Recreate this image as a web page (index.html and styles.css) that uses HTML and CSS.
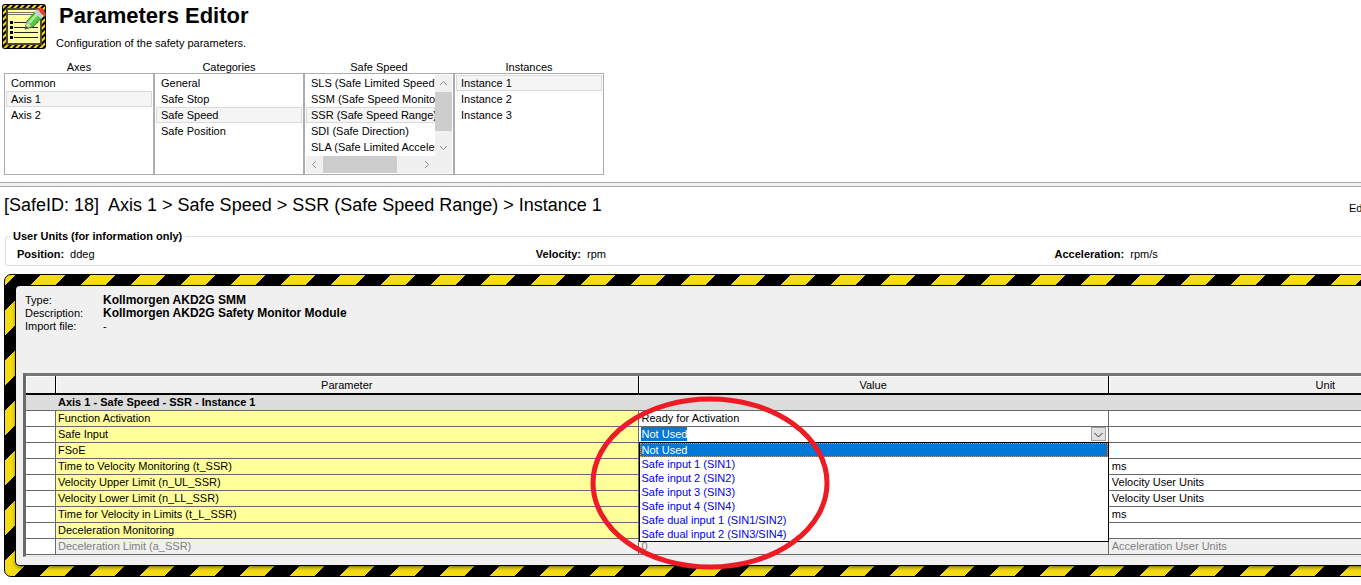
FILE: index.html
```html
<!DOCTYPE html>
<html lang="en">
<head>
<meta charset="utf-8">
<title>Parameters Editor</title>
<link rel="stylesheet" href="styles.css">
</head>
<body>
<header class="page-head">
  <svg class="logo" viewBox="0 0 44 45" aria-hidden="true">
    <defs>
      <pattern id="hazard" width="6" height="6" patternUnits="userSpaceOnUse">
        <rect width="6" height="6" fill="#000"/>
        <path d="M0 3L3 0H6L0 6ZM6 3V6H3Z" fill="#ffd90a"/>
      </pattern>
    </defs>
    <rect width="44" height="45" rx="3" fill="#000"/>
    <rect x="1" y="1" width="42" height="43" rx="2" fill="url(#hazard)"/>
    <rect x="4" y="4" width="36" height="37" fill="#4a4a38"/>
    <rect x="6" y="6" width="32" height="33" fill="#ffffa8"/>
    <path d="M6 8.500H38M6 10.500H38" stroke="#77775f"/>
    <path d="M8 17h3v3H8zM8 22h3v3H8zM8 27h3v3H8zM8 32h3v3H8z" fill="#000"/>
    <path d="M12 18.500H36M12 23.500H36M12 28.500H36M12 33.500H36" stroke="#222"/>
    <path d="M23 25l2-8L34 7l6 6-9 10z" fill="#55c94a" stroke="#2b7d2b"/>
    <path d="M26 18l9-10 2 2-9 10z" fill="#a8f08e"/>
    <path d="M23 25l2-7 4 4z" fill="#e8d9b0"/>
    <path d="M23 25l1-3 2 2z" fill="#333"/>
    <path d="M32 8l3-3 7 7-3 3z" fill="#c8ccd4"/>
    <path d="M35 5q4-3 7 1t1 7z" fill="#e0402a"/>
  </svg>
  <div>
    <h1>Parameters Editor</h1>
    <p>Configuration of the safety parameters.</p>
  </div>
</header>

<nav class="pickers">
  <section class="picker">
    <h2>Axes</h2>
    <ul>
      <li><button>Common</button></li>
      <li><button class="on">Axis 1</button></li>
      <li><button>Axis 2</button></li>
    </ul>
  </section>
  <section class="picker">
    <h2>Categories</h2>
    <ul>
      <li><button>General</button></li>
      <li><button>Safe Stop</button></li>
      <li><button class="on">Safe Speed</button></li>
      <li><button>Safe Position</button></li>
    </ul>
  </section>
  <section class="picker">
    <h2>Safe Speed</h2>
    <div class="scroller">
      <ul>
        <li><button>SLS (Safe Limited Speed)</button></li>
        <li><button>SSM (Safe Speed Monitor)</button></li>
        <li><button class="on">SSR (Safe Speed Range)</button></li>
        <li><button>SDI (Safe Direction)</button></li>
        <li><button>SLA (Safe Limited Acceleration)</button></li>
      </ul>
      <div class="vbar">
        <svg viewBox="0 0 17 17"><path d="M5 10l3.500-3.500L12 10"/></svg>
        <span class="thumb"></span>
        <svg viewBox="0 0 17 17"><path d="M5 7l3.500 3.500L12 7"/></svg>
      </div>
      <div class="hbar">
        <svg viewBox="0 0 17 17"><path d="M10 5L6.500 8.500L10 12"/></svg>
        <span class="thumb"></span>
        <svg viewBox="0 0 17 17"><path d="M7 5l3.500 3.500L7 12"/></svg>
      </div>
    </div>
  </section>
  <section class="picker">
    <h2>Instances</h2>
    <ul>
      <li><button class="on">Instance 1</button></li>
      <li><button>Instance 2</button></li>
      <li><button>Instance 3</button></li>
    </ul>
  </section>
</nav>

<div class="splitter"></div>

<main>
  <div class="crumbs">
    <h2>[SafeID: 18]&nbsp; Axis 1 &gt; Safe Speed &gt; SSR (Safe Speed Range) &gt; Instance 1</h2>
    <span class="edge">Ed</span>
  </div>

  <div class="workspace">
    <fieldset class="units">
      <legend>User Units (for information only)</legend>
      <div><b>Position:</b> ddeg</div>
      <div><b>Velocity:</b> rpm</div>
      <div><b>Acceleration:</b> rpm/s</div>
    </fieldset>

    <div class="hazard">
      <div class="panel">
        <dl>
          <dt>Type:</dt><dd><b>Kollmorgen AKD2G SMM</b></dd>
          <dt>Description:</dt><dd><b>Kollmorgen AKD2G Safety Monitor Module</b></dd>
          <dt>Import file:</dt><dd>-</dd>
        </dl>
        <div class="grid">
          <table>
            <colgroup><col class="c-mark"><col class="c-name"><col class="c-value"><col></colgroup>
            <thead>
              <tr><th></th><th>Parameter</th><th>Value</th><th>Unit</th></tr>
            </thead>
            <tbody>
              <tr class="group"><td></td><td class="name" colspan="3">Axis 1 - Safe Speed - SSR - Instance 1</td></tr>
              <tr><td></td><td class="name">Function Activation</td><td>Ready for Activation</td><td></td></tr>
              <tr>
                <td></td><td class="name"><label for="safe-input">Safe Input</label></td>
                <td class="edit">
                  <div class="combo">
                    <input id="safe-input" type="text" value="Not Used">
                    <button aria-label="Open list"><svg viewBox="0 0 12 12"><path d="M2 5l4 4 4-4"/></svg></button>
                  </div>
                  <ul class="options" role="listbox" aria-label="Safe Input">
                    <li role="option" aria-selected="true">Not Used</li>
                    <li role="option">Safe input 1 (SIN1)</li>
                    <li role="option">Safe input 2 (SIN2)</li>
                    <li role="option">Safe input 3 (SIN3)</li>
                    <li role="option">Safe input 4 (SIN4)</li>
                    <li role="option">Safe dual input 1 (SIN1/SIN2)</li>
                    <li role="option">Safe dual input 2 (SIN3/SIN4)</li>
                  </ul>
                  <svg class="ring" viewBox="0 0 240 174" aria-hidden="true"><ellipse cx="120" cy="87" rx="117" ry="84"/></svg>
                </td>
                <td></td>
              </tr>
              <tr><td></td><td class="name">FSoE</td><td></td><td></td></tr>
              <tr><td></td><td class="name">Time to Velocity Monitoring (t_SSR)</td><td></td><td>ms</td></tr>
              <tr><td></td><td class="name">Velocity Upper Limit (n_UL_SSR)</td><td></td><td>Velocity User Units</td></tr>
              <tr><td></td><td class="name">Velocity Lower Limit (n_LL_SSR)</td><td></td><td>Velocity User Units</td></tr>
              <tr><td></td><td class="name">Time for Velocity in Limits (t_L_SSR)</td><td></td><td>ms</td></tr>
              <tr><td></td><td class="name">Deceleration Monitoring</td><td></td><td></td></tr>
              <tr class="off"><td></td><td class="name">Deceleration Limit (a_SSR)</td><td>0</td><td>Acceleration User Units</td></tr>
            </tbody>
          </table>
        </div>
      </div>
    </div>
  </div>
</main>
</body>
</html>
```
FILE: styles.css
```css
* { box-sizing: border-box; }
body {
  margin: 0;
  background: #fff;
  color: #000;
  font: 11px/16px "Liberation Sans", Arial, sans-serif;
}
main { overflow: hidden; }
h1, h2, p, ul, dl, dd { margin: 0; padding: 0; }
ul { list-style: none; }
button, input { font: inherit; color: inherit; border: 0; padding: 0; margin: 0; }

.page-head { display: flex; gap: 10px; padding: 4px 2px 0; height: 59px; }
.logo { width: 44px; height: 45px; flex: none; }
.page-head h1 { font-size: 22px; line-height: 24px; padding-left: 3px; }
.page-head p { padding-top: 7px; }

.pickers { display: flex; padding: 0 4px; }
.picker { width: 150px; }
.picker h2 { font-size: 11px; font-weight: normal; line-height: 14px; padding-top: 1px; height: 14px; text-align: center; }
.picker > ul, .scroller { height: 102px; border: 1px solid #abadb3; padding: 1px; }
.picker button {
  display: block;
  width: 100%;
  height: 16px;
  line-height: 14px;
  padding: 0 4px;
  border: 1px solid transparent;
  background: none;
  text-align: left;
  white-space: nowrap;
}
.picker button.on { background: #f5f5f5; border-color: #dadada; }
.scroller { display: grid; grid-template: 1fr 17px / 1fr 17px; }
.scroller ul { overflow: hidden; }
.vbar, .hbar { display: flex; background: #f0f0f0; justify-content: space-between; }
.vbar { flex-direction: column; }
.hbar { grid-column: 1 / 3; padding-right: 17px; }
.vbar svg, .hbar svg { width: 17px; height: 17px; flex: none; fill: none; stroke: #8a8a8a; }
.thumb { background: #cdcdcd; }
.vbar .thumb { height: 39px; margin-bottom: auto; }
.hbar .thumb { width: 74px; margin-right: auto; }

.splitter { height: 5px; margin-top: 7px; background: #f0f0f0; border: solid #a8a8a8; border-width: 1px 0; }

.crumbs { display: flex; justify-content: space-between; padding-left: 4px; height: 43px; }
.crumbs h2 { font-size: 18px; font-weight: normal; line-height: 36px; }
.edge { width: 12px; overflow: hidden; padding-top: 13px; }

.workspace { width: calc(100% + 201px); padding: 0 0 8px 4px; }
.units {
  display: grid;
  grid-template-columns: repeat(3, 33.6%);
  margin: 0 0 8px 1px;
  padding: 4px 0 3px 11px;
  border: 1px solid #d5dfe5;
  border-radius: 3px;
}
.units legend { font-weight: bold; line-height: 12px; padding: 0 3px; margin-left: -7px; }
.units b { margin-right: 3px; }

.hazard {
  padding: 11px;
  border: 1px solid #000;
  border-radius: 7px;
  background: linear-gradient(135deg, #f5db12 0 13%, #000 13% 38%, #f5db12 38% 63%, #000 63% 88%, #f5db12 88%) border-box 0 0 / 50px 50px;
}
.panel {
  padding: 8px 7px;
  background: #f0f0f0;
  border-radius: 4px;
  box-shadow: 0 0 0 1px #000, 0 2px 4px #0009;
}
.panel dl { display: grid; grid-template-columns: 78px 1fr; padding-left: 2px; line-height: 13px; height: 79px; align-content: start; }
.panel dd b { font-size: 12px; }

.grid { border: solid #696969; border-width: 3px 0 1px 3px; border-top-color: #777; border-bottom-color: #e3e3e3; padding-bottom: 1px; }
table { width: 100%; table-layout: fixed; border-collapse: separate; border-spacing: 0; }
.c-mark { width: 30px; }
.c-name { width: 38.4%; }
.c-value { width: 31%; }
th {
  height: 19px;
  padding: 0;
  line-height: 16px;
  font-weight: normal;
  background: #f0f0f0;
  border-right: 1px solid #000;
  border-bottom: 2px solid #000;
  box-shadow: inset 1px 1px #fff;
}
td {
  height: 16px;
  padding: 0 3px;
  line-height: 15px;
  background: #fff;
  border: solid #696969;
  border-width: 0 1px 1px 0;
  white-space: nowrap;
}
.name { padding-left: 2px; background: #ffff99; }
.group td { background: #dcdcdc; border-right: 0; font-weight: bold; }
.off td { background: #f0f0f0; color: #808080; }
.off td:first-child { background: #fff; }

.edit { position: relative; padding: 0 2px; }
.combo { display: flex; justify-content: space-between; height: 15px; }
.combo input { width: 46px; height: 14px; padding-left: 1px; background: #0078d7; color: #fff; }
.combo button { width: 15px; height: 14px; background: #e1e1e1; border: 1px solid #a0a0a0; }
.combo svg { display: block; width: 13px; height: 12px; fill: none; stroke: #333; }
.options {
  position: absolute;
  z-index: 1;
  top: 15px;
  left: 0;
  right: -1px;
  border: 1px solid #000;
  background: #fff;
  color: #0000f0;
  line-height: 14px;
}
.options li { height: 14px; padding: 0 2px; }
.options li[aria-selected="true"] {
  background: #0078d7;
  color: #fff;
  outline: 1px dotted #ff8728;
  outline-offset: -1px;
}
.ring {
  position: absolute;
  z-index: 2;
  top: -31px;
  left: -49px;
  width: 240px;
  height: 174px;
  fill: none;
  stroke: #ed1c24;
  stroke-width: 5;
  pointer-events: none;
}
```
